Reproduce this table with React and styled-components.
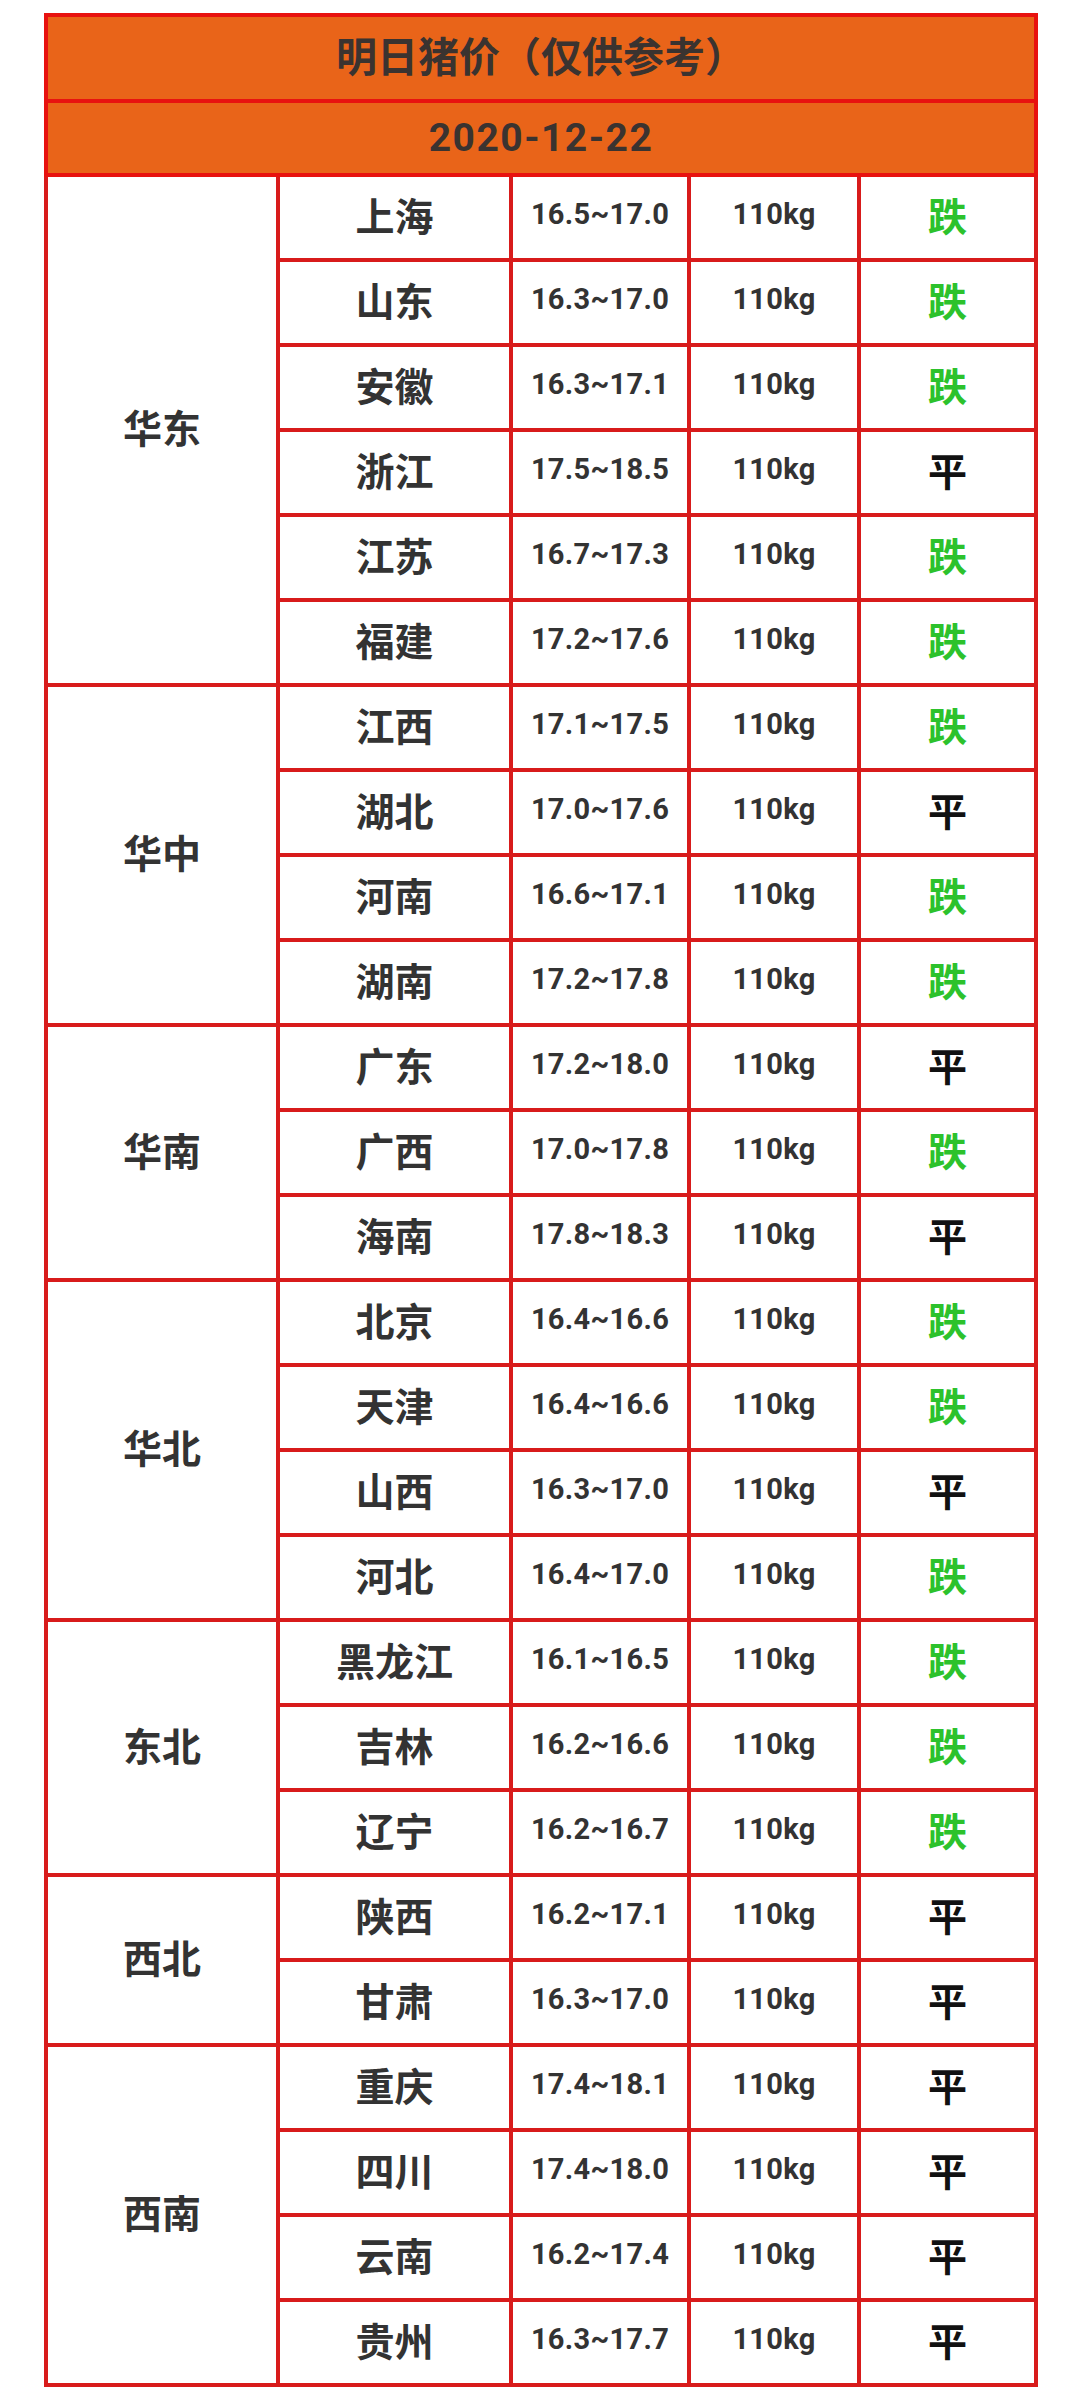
import React from "react";
import styled, { createGlobalStyle } from "styled-components";

const GlobalStyle = createGlobalStyle`
  html, body {
    margin: 0;
    padding: 0;
    background: #ffffff;
  }
  body {
    font-family: "Roboto", "Noto Sans CJK SC", sans-serif;
  }
`;

const regions = [
  {
    name: "华东",
    rows: [
      ["上海", "16.5~17.0", "跌"],
      ["山东", "16.3~17.0", "跌"],
      ["安徽", "16.3~17.1", "跌"],
      ["浙江", "17.5~18.5", "平"],
      ["江苏", "16.7~17.3", "跌"],
      ["福建", "17.2~17.6", "跌"],
    ],
  },
  {
    name: "华中",
    rows: [
      ["江西", "17.1~17.5", "跌"],
      ["湖北", "17.0~17.6", "平"],
      ["河南", "16.6~17.1", "跌"],
      ["湖南", "17.2~17.8", "跌"],
    ],
  },
  {
    name: "华南",
    rows: [
      ["广东", "17.2~18.0", "平"],
      ["广西", "17.0~17.8", "跌"],
      ["海南", "17.8~18.3", "平"],
    ],
  },
  {
    name: "华北",
    rows: [
      ["北京", "16.4~16.6", "跌"],
      ["天津", "16.4~16.6", "跌"],
      ["山西", "16.3~17.0", "平"],
      ["河北", "16.4~17.0", "跌"],
    ],
  },
  {
    name: "东北",
    rows: [
      ["黑龙江", "16.1~16.5", "跌"],
      ["吉林", "16.2~16.6", "跌"],
      ["辽宁", "16.2~16.7", "跌"],
    ],
  },
  {
    name: "西北",
    rows: [
      ["陕西", "16.2~17.1", "平"],
      ["甘肃", "16.3~17.0", "平"],
    ],
  },
  {
    name: "西南",
    rows: [
      ["重庆", "17.4~18.1", "平"],
      ["四川", "17.4~18.0", "平"],
      ["云南", "16.2~17.4", "平"],
      ["贵州", "16.3~17.7", "平"],
    ],
  },
];

const Page = styled.div`
  padding: 13px 0 0 44px;
  height: 2396px;
  box-sizing: border-box;
`;

const Table = styled.table`
  width: 990px;
  border-collapse: collapse;
  table-layout: fixed;
  border: 4px solid #e01a1a;
  color: #333333;
`;

const HeadRow = styled.tr`
  height: ${(p) => p.$h}px;
  background: #e96419;
`;

const HeadCell = styled.td`
  border: 4px solid #e8120f;
  text-align: center;
  vertical-align: middle;
  padding: 0 0 ${(p) => p.$lift || 0}px;
  font-family: "Roboto", "Noto Sans CJK SC", sans-serif;
  font-weight: 700;
  font-size: ${(p) => p.$size}px;
  letter-spacing: ${(p) => p.$ls || 0}px;
  color: #3a3330;
`;

const Row = styled.tr`
  height: 85px;
`;

const Cell = styled.td`
  border: 4px solid #d81b1b;
  text-align: center;
  vertical-align: middle;
  padding: 0 0 8px;
  background: #ffffff;
`;

const RegionCell = styled(Cell)`
  font-family: "Noto Sans CJK SC", sans-serif;
  font-weight: 700;
  font-size: 39px;
  color: #333333;
`;

const NameCell = styled(Cell)`
  font-family: "Noto Sans CJK SC", sans-serif;
  font-weight: 700;
  font-size: 39px;
  color: #333333;
`;

const NumCell = styled(Cell)`
  padding-bottom: 7px;
  font-family: "Roboto", sans-serif;
  font-weight: 700;
  font-size: 29px;
  letter-spacing: 0.3px;
  color: #333333;
`;

const TrendCell = styled(Cell)`
  font-family: "Noto Sans CJK SC", sans-serif;
  font-weight: 700;
  font-size: 39px;
  color: ${(p) => (p.$down ? "#2cc22c" : "#111111")};
`;

export default function App() {
  return (
    <>
      <GlobalStyle />
      <Page>
        <Table>
          <colgroup>
            <col style={{ width: 232 }} />
            <col style={{ width: 233 }} />
            <col style={{ width: 178 }} />
            <col style={{ width: 170 }} />
            <col style={{ width: 177 }} />
          </colgroup>
          <tbody>
            <HeadRow $h={86}>
              <HeadCell colSpan={5} $size={41} $lift={8}>
                明日猪价（仅供参考）
              </HeadCell>
            </HeadRow>
            <HeadRow $h={74}>
              <HeadCell colSpan={5} $size={39} $ls={1.5}>
                2020-12-22
              </HeadCell>
            </HeadRow>
            {regions.map((region) =>
              region.rows.map(([name, price, trend], i) => (
                <Row key={region.name + name}>
                  {i === 0 && (
                    <RegionCell rowSpan={region.rows.length}>
                      {region.name}
                    </RegionCell>
                  )}
                  <NameCell>{name}</NameCell>
                  <NumCell>{price}</NumCell>
                  <NumCell>110kg</NumCell>
                  <TrendCell $down={trend === "跌"}>{trend}</TrendCell>
                </Row>
              ))
            )}
          </tbody>
        </Table>
      </Page>
    </>
  );
}
